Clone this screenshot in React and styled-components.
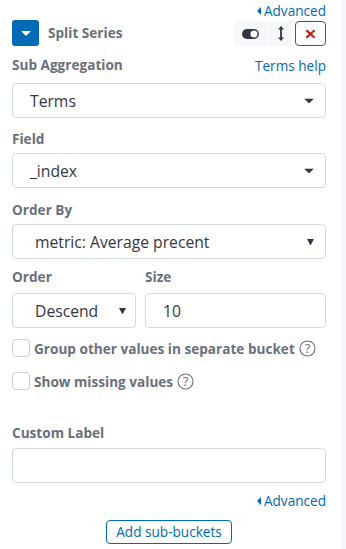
import React from 'react';
import styled, { createGlobalStyle } from 'styled-components';

const Global = createGlobalStyle`
  html, body { margin: 0; padding: 0; background: #fff; }
  body { font-family: "Open Sans", "Noto Sans", sans-serif; -webkit-font-smoothing: antialiased; }
  * { box-sizing: border-box; }
`;

const Page = styled.div`
  display: flex;
  width: 346px;
  height: 549px;
  overflow: hidden;
`;

const Panel = styled.div`
  width: 340px;
  padding: 0 14px 0 12px;
  background: #fff;
  display: flex;
  flex-direction: column;
`;

const Strip = styled.div`
  flex: 1;
  background: #f5f7fa;
`;

const LinkRow = styled.div`
  display: flex;
  justify-content: ${p => p.$center ? 'center' : 'flex-end'};
  margin-top: ${p => p.$mt || 0}px;
  height: 18px;
  line-height: 18px;
`;

const Link = styled.a`
  display: inline-flex;
  align-items: center;
  gap: 3px;
  color: #006bb4;
  font-size: 13.6px;
  text-decoration: none;
  cursor: pointer;
`;

const Header = styled.div`
  display: flex;
  align-items: flex-start;
  height: 26px;
`;

const ToggleBtn = styled.button`
  width: 27px;
  height: 26px;
  border: none;
  border-radius: 3px;
  background: #006bb4;
  display: flex;
  align-items: center;
  justify-content: center;
  padding: 0;
`;

const Title = styled.div`
  margin-left: 9px;
  line-height: 26px;
  font-size: 13.6px;
  font-weight: 700;
  color: #69707d;
  flex: 1;
`;

const Actions = styled.div`
  display: flex;
  margin-top: 1px;
  gap: 1px;
`;

const ActionBtn = styled.button`
  height: 25px;
  width: ${p => p.$w}px;
  padding: 0;
  display: flex;
  align-items: center;
  justify-content: center;
  background: ${p => p.$danger ? '#fff' : '#f5f7fa'};
  border: ${p => p.$danger ? '1px solid #bd271e' : 'none'};
  border-radius: ${p => p.$radius};
  margin-left: ${p => p.$ml || 0}px;
`;

const LabelRow = styled.div`
  display: flex;
  justify-content: space-between;
  align-items: center;
  margin-top: ${p => p.$mt || 0}px;
  height: 20px;
`;

const Label = styled.label`
  font-size: 13.6px;
  font-weight: 700;
  color: #69707d;
  line-height: 20px;
`;

const Control = styled.div`
  position: relative;
  margin-top: ${p => p.$mt || 0}px;
  height: 35px;
  width: 100%;
  border: 1px solid #d3dae6;
  border-radius: 4px;
  background: #fff;
  display: flex;
  align-items: center;
  padding-left: ${p => p.$pad || 17}px;
  font-size: 15.7px;
  color: #343741;
`;

const Caret = styled.span`
  position: absolute;
  right: ${p => p.$right}px;
  top: 50%;
  transform: translateY(-50%);
  display: flex;
`;

const Cols = styled.div`
  display: flex;
  gap: 9px;
`;

const Col = styled.div`
  display: flex;
  flex-direction: column;
  width: ${p => p.$w ? p.$w + 'px' : 'auto'};
  flex: ${p => p.$w ? 'none' : 1};
`;

const CheckRow = styled.div`
  display: flex;
  align-items: center;
  height: 20px;
  margin-top: ${p => p.$mt || 0}px;
`;

const Box = styled.span`
  width: 18px;
  height: 18px;
  border: 1px solid #c9cfd8;
  border-radius: 4px;
  background: #fff;
  margin-right: 4px;
`;

const CheckText = styled.span`
  font-size: 13.6px;
  font-weight: 700;
  color: #69707d;
  margin-right: 4px;
`;

const AddBtn = styled.button`
  height: 24px;
  padding: 0 9px;
  border: 1px solid #006bb4;
  border-radius: 4px;
  background: #fff;
  color: #006bb4;
  font-family: "Open Sans", sans-serif;
  font-size: 13.6px;
  line-height: 20px;
`;

const LeftTri = () => (
  <svg width="4" height="8" viewBox="0 0 4 8"><path d="M4 0 L0 4 L4 8 Z" fill="#006bb4" /></svg>
);

const WideCaret = () => (
  <svg width="10" height="5" viewBox="0 0 10 5"><path d="M0 0 L10 0 L5 5 Z" fill="#343741" /></svg>
);

const SmallCaret = () => (
  <svg width="7" height="7" viewBox="0 0 7 7"><path d="M0 0.5 L7 0.5 L3.5 7 Z" fill="#343741" /></svg>
);

const Help = () => (
  <svg width="17" height="17" viewBox="0 0 17 17">
    <circle cx="8.5" cy="8.5" r="7.5" fill="none" stroke="#69707d" strokeWidth="1.1" />
    <text x="8.5" y="13.2" textAnchor="middle" fontSize="13" fontFamily="Open Sans, sans-serif" fill="#69707d">?</text>
  </svg>
);

export default function App() {
  return (
    <>
      <Global />
      <Page>
        <Panel>
          <LinkRow $mt={2}><Link><LeftTri />Advanced</Link></LinkRow>
          <Header>
            <ToggleBtn aria-label="toggle">
              <svg width="10" height="5" viewBox="0 0 10 5"><path d="M0 0 L10 0 L5 5 Z" fill="#fff" /></svg>
            </ToggleBtn>
            <Title>Split Series</Title>
            <Actions>
              <ActionBtn $w={33} $radius="4px 0 0 4px" aria-label="disable">
                <svg width="17" height="10" viewBox="0 0 17 10">
                  <rect x="0" y="0" width="17" height="10" rx="5" fill="#343741" />
                  <circle cx="12" cy="5" r="3.6" fill="#fff" />
                </svg>
              </ActionBtn>
              <ActionBtn $w={25} $radius="0" aria-label="move">
                <svg width="6" height="15" viewBox="0 0 6 15">
                  <path d="M3 0 L6 3.6 L3.9 3.6 L3.9 11.4 L6 11.4 L3 15 L0 11.4 L2.1 11.4 L2.1 3.6 L0 3.6 Z" fill="#343741" />
                </svg>
              </ActionBtn>
              <ActionBtn $w={31} $radius="4px" $danger $ml={1} aria-label="remove">
                <svg width="9" height="8" viewBox="0 0 9 8">
                  <path d="M1 0.8 L8 7.2 M8 0.8 L1 7.2" stroke="#bd271e" strokeWidth="2.2" strokeLinecap="square" />
                </svg>
              </ActionBtn>
            </Actions>
          </Header>

          <LabelRow $mt={9}>
            <Label>Sub Aggregation</Label>
            <Link>Terms help</Link>
          </LabelRow>
          <Control $mt={8} $pad={17}>Terms<Caret $right={11}><WideCaret /></Caret></Control>

          <LabelRow $mt={11}><Label>Field</Label></LabelRow>
          <Control $mt={4} $pad={17}>_index<Caret $right={11}><WideCaret /></Caret></Control>

          <LabelRow $mt={12}><Label>Order By</Label></LabelRow>
          <Control $mt={4} $pad={22}>metric: Average precent<Caret $right={11}><SmallCaret /></Caret></Control>

          <Cols>
            <Col $w={124}>
              <LabelRow $mt={8}><Label>Order</Label></LabelRow>
              <Control $mt={6} $pad={22}>Descend<Caret $right={9}><SmallCaret /></Caret></Control>
            </Col>
            <Col>
              <LabelRow $mt={8}><Label>Size</Label></LabelRow>
              <Control $mt={6} $pad={17}>10</Control>
            </Col>
          </Cols>

          <CheckRow $mt={10}>
            <Box /><CheckText>Group other values in separate bucket</CheckText><Help />
          </CheckRow>
          <CheckRow $mt={13}>
            <Box /><CheckText>Show missing values</CheckText><Help />
          </CheckRow>

          <LabelRow $mt={32}><Label>Custom Label</Label></LabelRow>
          <Control $mt={5} />

          <LinkRow $mt={9}><Link><LeftTri />Advanced</Link></LinkRow>
          <LinkRow $center $mt={10}><AddBtn>Add sub-buckets</AddBtn></LinkRow>
        </Panel>
        <Strip />
      </Page>
    </>
  );
}
